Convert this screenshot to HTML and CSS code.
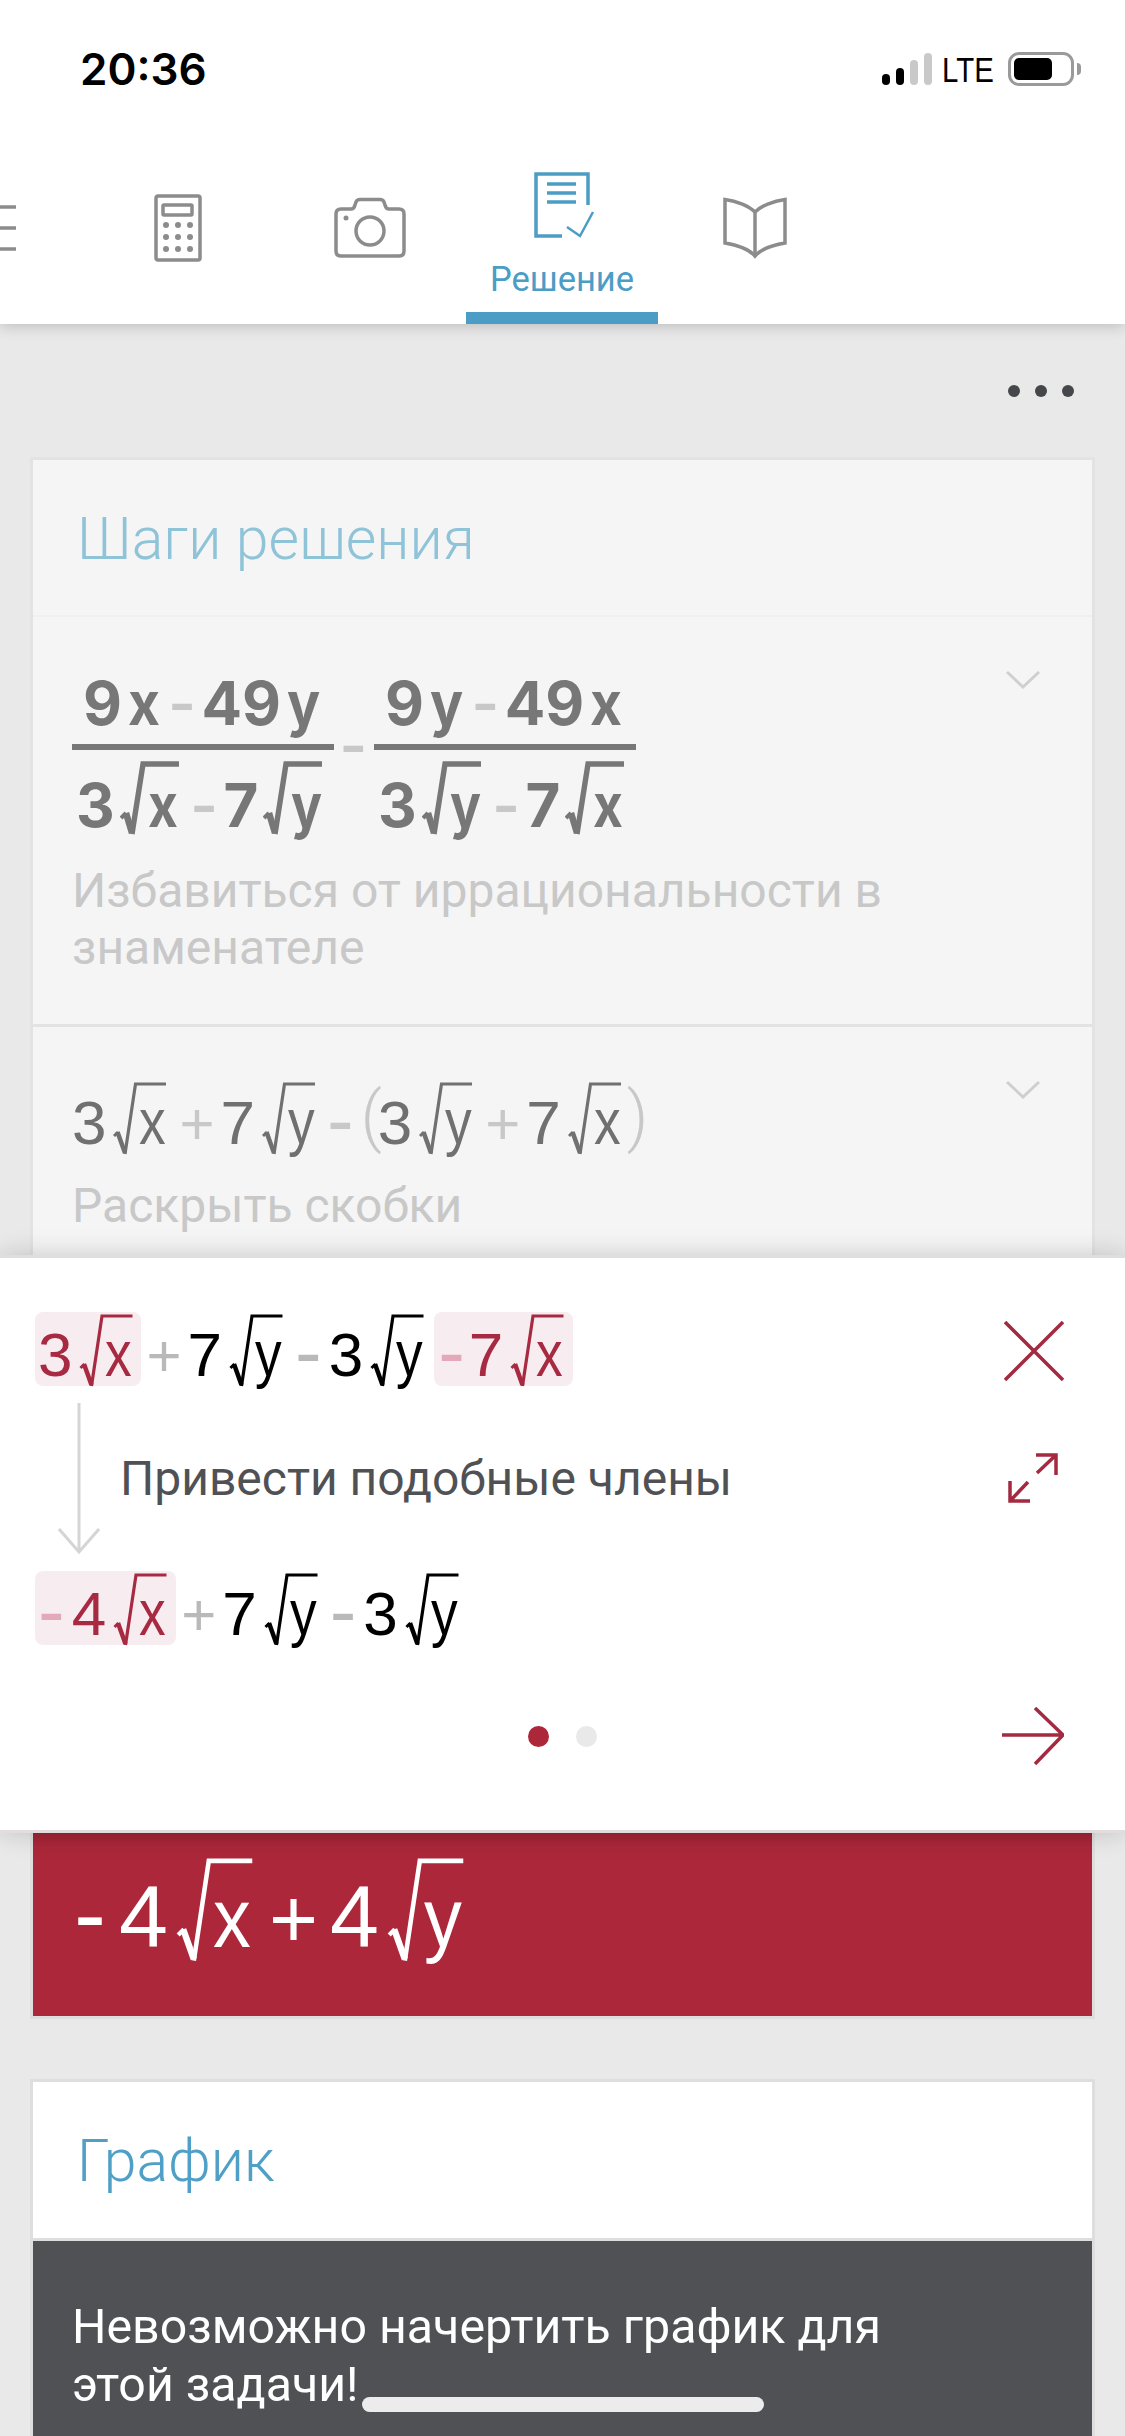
FILE: index.html
```html
<!DOCTYPE html>
<html lang="ru">
<head>
    <meta charset="UTF-8">
    <meta name="viewport" content="width=device-width, initial-scale=1.0">
    <title>Решение</title>
    <link rel="stylesheet" href="styles.css">
</head>
<body>
    <!-- radical signs, reused by every root below -->
    <svg class="defs" aria-hidden="true">
        <symbol id="rad" viewBox="0 0 53 73">
            <path d="M1 54 L5 50" fill="none" stroke="currentColor" stroke-width="3"/>
            <path d="M4.500 50 L12 71" fill="none" stroke="currentColor" stroke-width="4.500"/>
            <path d="M12 72 L22.500 2 L53 2" fill="none" stroke="currentColor" stroke-width="3.200"/>
        </symbol>
        <symbol id="rad-bold" viewBox="0 0 59 75">
            <path d="M1 57 L6 52" fill="none" stroke="currentColor" stroke-width="4"/>
            <path d="M6 52 L12 72" fill="none" stroke="currentColor" stroke-width="6.500"/>
            <path d="M12 73 L23 3 L59 3" fill="none" stroke="currentColor" stroke-width="5.400"/>
        </symbol>
    </svg>

    <div class="page">
        <header class="top">
            <div class="status">
                <span class="time">20:36</span>
                <div class="status-right">
                    <div class="signal">
                        <i class="s1"></i><i class="s2"></i><i class="s3"></i><i class="s4"></i>
                    </div>
                    <span class="lte">LTE</span>
                    <div class="battery"><div class="battery-fill"></div></div>
                    <div class="battery-nub"></div>
                </div>
            </div>
            <nav class="tabs">
                <div class="tab">
                    <svg width="60" height="48" viewBox="0 0 60 48" class="ico">
                        <path d="M0 3H60M0 24H60M0 45H60" />
                    </svg>
                </div>
                <div class="tab">
                    <svg width="48" height="68" viewBox="0 0 48 68" class="ico">
                        <rect x="2" y="2" width="44" height="64" rx="2"/>
                        <rect x="9" y="11" width="29" height="10" rx="1"/>
                        <g class="ico-dots">
                            <circle cx="12" cy="31" r="3"/><circle cx="24" cy="31" r="3"/><circle cx="36" cy="31" r="3"/>
                            <circle cx="12" cy="43" r="3"/><circle cx="24" cy="43" r="3"/><circle cx="36" cy="43" r="3"/>
                            <circle cx="12" cy="55" r="3"/><circle cx="24" cy="55" r="3"/><circle cx="36" cy="55" r="3"/>
                        </g>
                    </svg>
                </div>
                <div class="tab">
                    <svg width="72" height="60" viewBox="0 0 72 60" class="ico">
                        <path d="M2 16 Q2 11 7 11 H17 Q20 11 21 7 L22 4 Q23 1.500 26 1.500 H46 Q49 1.500 50 4 L51 7 Q52 11 55 11 H65 Q70 11 70 16 V53 Q70 58 65 58 H7 Q2 58 2 53 Z"/>
                        <circle cx="36" cy="33" r="14"/>
                        <circle class="ico-fill" cx="12" cy="20" r="2.500"/>
                    </svg>
                </div>
                <div class="tab tab-active">
                    <svg width="60" height="66" viewBox="0 0 60 66" class="ico ico-blue">
                        <path d="M30 64 H4 V2 H56 V33"/>
                        <path d="M15 12H44M15 21H44M15 30H44"/>
                        <path class="ico-thin" d="M35 55 L48 64 L61 40"/>
                    </svg>
                    <span class="tab-label">Решение</span>
                </div>
                <div class="tab">
                    <svg width="64" height="60" viewBox="-1 0 64 60" class="ico">
                        <path d="M32 14 C26 8 14 3 2 1.500 V45 C14 47 25 50 32 58 C39 50 50 47 62 45 V1.500 C50 3 38 8 32 14 Z"/>
                        <path d="M32 14 V58"/>
                    </svg>
                </div>
            </nav>
        </header>

        <div class="more"><i></i><i></i><i></i></div>

        <main class="content">
            <section class="card card-steps">
                <h2 class="card-title card-title-faded">Шаги решения</h2>

                <div class="step">
                    <div class="math-frac">
                        <div class="frac">
                            <div class="math num">
                                <b class="n">9</b><b class="v">x</b><span class="op minus">-</span><b class="n">49</b><b class="v">y</b>
                            </div>
                            <div class="math den">
                                <b class="n">3</b>
                                <b class="sqrt"><svg><use href="#rad-bold"/></svg><span class="v">x</span></b>
                                <span class="op minus">-</span>
                                <b class="n">7</b>
                                <b class="sqrt"><svg><use href="#rad-bold"/></svg><span class="v">y</span></b>
                            </div>
                        </div>
                        <span class="op minus frac-minus">-</span>
                        <div class="frac">
                            <div class="math num">
                                <b class="n">9</b><b class="v">y</b><span class="op minus">-</span><b class="n">49</b><b class="v">x</b>
                            </div>
                            <div class="math den">
                                <b class="n">3</b>
                                <b class="sqrt"><svg><use href="#rad-bold"/></svg><span class="v">y</span></b>
                                <span class="op minus">-</span>
                                <b class="n">7</b>
                                <b class="sqrt"><svg><use href="#rad-bold"/></svg><span class="v">x</span></b>
                            </div>
                        </div>
                    </div>
                    <p class="step-text">Избавиться от иррациональности в знаменателе</p>
                    <svg class="chev" width="34" height="20" viewBox="0 0 34 20"><path d="M1 2 L17 17 L33 2"/></svg>
                </div>

                <div class="step step-2">
                    <div class="math">
                        <span class="n">3</span>
                        <span class="sqrt"><svg><use href="#rad"/></svg><span class="v">x</span></span>
                        <span class="op">+</span>
                        <span class="n">7</span>
                        <span class="sqrt"><svg><use href="#rad"/></svg><span class="v">y</span></span>
                        <span class="op minus">-</span>
                        <span class="op paren">(</span>
                        <span class="n">3</span>
                        <span class="sqrt"><svg><use href="#rad"/></svg><span class="v">y</span></span>
                        <span class="op">+</span>
                        <span class="n">7</span>
                        <span class="sqrt"><svg><use href="#rad"/></svg><span class="v">x</span></span>
                        <span class="op paren paren-end">)</span>
                    </div>
                    <p class="step-text">Раскрыть скобки</p>
                    <svg class="chev" width="34" height="20" viewBox="0 0 34 20"><path d="M1 2 L17 17 L33 2"/></svg>
                </div>
            </section>

            <section class="answer">
                <div class="math math-big">
                    <span class="op-big minus-big">-</span>
                    <span class="n">4</span>
                    <span class="sqrt"><svg><use href="#rad"/></svg><span class="v">x</span></span>
                    <span class="op-big">+</span>
                    <span class="n">4</span>
                    <span class="sqrt"><svg><use href="#rad"/></svg><span class="v">y</span></span>
                </div>
            </section>

            <section class="card card-graph">
                <h2 class="card-title">График</h2>
                <div class="graph-msg">Невозможно начертить график для этой задачи!</div>
            </section>
        </main>

        <!-- popup with the current step, sits over the list -->
        <aside class="sheet">
            <div class="sheet-row">
                <div class="math">
                    <span class="hl hl-a">
                        <span class="n">3</span>
                        <span class="sqrt"><svg><use href="#rad"/></svg><span class="v">x</span></span>
                    </span>
                    <span class="op">+</span>
                    <span class="n">7</span>
                    <span class="sqrt"><svg><use href="#rad"/></svg><span class="v">y</span></span>
                    <span class="op minus">-</span>
                    <span class="n">3</span>
                    <span class="sqrt"><svg><use href="#rad"/></svg><span class="v">y</span></span>
                    <span class="hl hl-b">
                        <span class="op minus">-</span>
                        <span class="n">7</span>
                        <span class="sqrt"><svg><use href="#rad"/></svg><span class="v">x</span></span>
                    </span>
                </div>
                <svg class="act act-close" width="60" height="60" viewBox="0 0 60 60"><path d="M1 1 L59 59 M59 1 L1 59"/></svg>
            </div>

            <div class="sheet-mid">
                <svg class="down" width="42" height="152" viewBox="0 0 42 152"><path d="M21 0 V148 M1 126 L21 149 L41 126"/></svg>
                <p class="sheet-text">Привести подобные члены</p>
                <svg class="act act-expand" width="50" height="50" viewBox="0 0 50 50"><path d="M28 2 H48 V22 M48 2 L29 20 M2 28 V48 H22 M2 48 L20 29"/></svg>
            </div>

            <div class="math sheet-result">
                <span class="hl hl-c">
                    <span class="op minus">-</span>
                    <span class="n">4</span>
                    <span class="sqrt"><svg><use href="#rad"/></svg><span class="v">x</span></span>
                </span>
                <span class="op">+</span>
                <span class="n">7</span>
                <span class="sqrt"><svg><use href="#rad"/></svg><span class="v">y</span></span>
                <span class="op minus">-</span>
                <span class="n">3</span>
                <span class="sqrt"><svg><use href="#rad"/></svg><span class="v">y</span></span>
            </div>

            <div class="sheet-foot">
                <div class="dots"><i class="dot dot-on"></i><i class="dot"></i></div>
                <svg class="act" width="62" height="58" viewBox="0 0 62 58"><path d="M0 28 H61 M33 1 L61 28 L33 57"/></svg>
            </div>
        </aside>

        <div class="home-bar"></div>
    </div>
</body>
</html>
```

FILE: styles.css
```css
* {
    box-sizing: border-box;
}

body {
    margin: 0;
    font-family: Roboto, sans-serif;
    background-color: #e9e9e9;
}

.defs {
    display: none;
}

.page {
    position: relative;
    width: 1125px;
    height: 2436px;
    overflow: hidden;
    background-color: #e9e9e9;
}

/* top bar */
.top {
    height: 324px;
    background-color: white;
    box-shadow: 0 2px 14px rgba(0, 0, 0, 0.2);
    position: relative;
}

.status {
    height: 132px;
    padding: 0 44px 0 80px;
    display: flex;
    justify-content: space-between;
    align-items: flex-start;
}

.time {
    margin-top: 44px;
    font-family: Inter, sans-serif;
    font-weight: 600;
    font-size: 44px;
    line-height: 50px;
    color: black;
}

.status-right {
    display: flex;
    align-items: flex-start;
    margin-top: 52px;
}

.signal {
    height: 33px;
    display: flex;
    align-items: flex-end;
    gap: 6px;
}

.signal i {
    width: 8px;
    border-radius: 4px;
    background-color: #c9c9c9;
}

.signal .s1 {
    height: 11px;
    background-color: black;
}

.signal .s2 {
    height: 17px;
    background-color: black;
}

.signal .s3 {
    height: 25px;
}

.signal .s4 {
    height: 32px;
}

.lte {
    margin: 1px 14px 0 10px;
    width: 52px;
    font-family: "Liberation Sans", sans-serif;
    font-size: 35px;
    line-height: 34px;
    color: black;
    transform: scaleX(0.84);
    transform-origin: left;
}

.battery {
    width: 66px;
    height: 34px;
    border: 3px solid #9a9a9a;
    border-radius: 11px;
    padding: 3px;
}

.battery-fill {
    width: 38px;
    height: 22px;
    border-radius: 5px;
    background-color: black;
}

.battery-nub {
    width: 4px;
    height: 12px;
    margin: 11px 0 0 3px;
    border-radius: 0 4px 4px 0;
    background-color: #999;
}

.tabs {
    height: 192px;
    margin-left: -110px;
    display: flex;
}

.tab {
    flex: none;
    width: 192px;
    display: flex;
    flex-direction: column;
    align-items: center;
    justify-content: center;
}

.tab-active {
    justify-content: flex-start;
    padding-top: 40px;
    border-bottom: 12px solid #4b9dc5;
}

.tab-label {
    margin-top: 22px;
    font-size: 34.500px;
    line-height: 38px;
    color: #4b9dc5;
}

.ico {
    fill: none;
    stroke: #8c8c8c;
    stroke-width: 3.500;
    overflow: visible;
}

.ico-dots circle,
.ico-fill {
    fill: #8c8c8c;
    stroke: none;
}

.ico-blue {
    stroke: #4b9dc5;
}

.ico-blue .ico-thin {
    stroke-width: 2.500;
}

.more {
    height: 133px;
    display: flex;
    justify-content: flex-end;
    align-items: center;
    gap: 15px;
    padding-right: 51px;
}

.more i {
    width: 12px;
    height: 12px;
    border-radius: 50%;
    background-color: #46474b;
}

/* cards */
.content {
    padding: 0 30px;
}

.card {
    border: 3px solid #dedede;
    background-color: white;
}

.card-steps {
    height: 1376px;
    background-color: #f5f5f5;
    border-color: #e3e3e3;
    border-bottom: none;
}

.card-title {
    margin: 0;
    height: 156px;
    padding: 44px 0 0 44px;
    font-weight: 300;
    font-size: 59px;
    line-height: 70px;
    color: #4f9fc6;
}

.card-title-faded {
    height: 157px;
    color: #8fc3d8;
    border-bottom: 2px solid #f0f0f0;
}

.step {
    position: relative;
    height: 410px;
    padding: 0 0 0 39px;
    border-bottom: 3px solid #e3e3e3;
}

.step-2 {
    height: 240px;
    padding-top: 58px;
    border-bottom: none;
}

.step-text {
    margin: 0;
    width: 900px;
    font-size: 48px;
    line-height: 57px;
    color: #c8c8c8;
}

.step-2 .step-text {
    margin-top: 16px;
}

.chev {
    position: absolute;
    top: 53px;
    right: 52px;
    fill: none;
    stroke: #cfcfcf;
    stroke-width: 3;
}

/* math */
.math {
    display: flex;
    align-items: baseline;
    font-family: "Liberation Sans", sans-serif;
    font-size: 60px;
    line-height: 74px;
    color: #707070;
}

.n {
    font-size: 62px;
    margin-right: -1px;
}

.op {
    color: #c8c8c8;
    margin: 0 6px 0 13px;
}

.minus {
    margin: 0 7px 0 12px;
    font-size: 80px;
    line-height: 60px;
    transform: translateY(3px);
}

.paren {
    margin: 0 -4px 0 0;
    font-weight: 300;
    font-family: Roboto, sans-serif;
    font-size: 66px;
    line-height: 60px;
    transform: translateY(-5px);
}

.paren-end {
    margin: 0 0 0 6px;
}

/* the sign is laid over the left of its radicand */
.sqrt {
    position: relative;
    flex: none;
    display: inline-block;
    width: 54px;
    margin-left: 8px;
    padding-left: 26px;
    font-weight: inherit;
}

.step-2 .sqrt {
    width: 53px;
}

.sqrt svg {
    position: absolute;
    left: 0;
    bottom: 6px;
    width: 100%;
    height: 73px;
}

.sqrt .v {
    display: inline-block;
    font-size: 65px;
    transform: scaleX(0.82);
    transform-origin: left;
}

.math-frac {
    display: flex;
    padding-top: 49px;
    height: 245px;
}

.frac {
    width: 262px;
}

.frac-minus {
    width: 40px;
    height: 40px;
    margin: 54px 0 0 0;
    padding-left: 6px;
    line-height: 40px;
    font-family: "Liberation Sans", sans-serif;
}

.frac b {
    font-family: Inter, sans-serif;
    font-weight: bold;
}

.frac .n {
    font-size: 60px;
    margin-right: 0;
}

.num {
    justify-content: center;
    height: 84px;
    border-bottom: 6px solid #777;
    color: #777;
}

.num .v {
    margin-left: 6px;
    transform: scaleX(0.92);
    transform-origin: left;
}

.num .op {
    margin: 0 6px 0 6px;
}

.den {
    margin-top: 18px;
    padding-left: 4px;
    color: #777;
}

.den .op {
    margin: 0 6px 0 12px;
}

.den .sqrt {
    width: 59px;
    margin-left: 5px;
    padding-left: 28px;
}

.den .sqrt svg {
    height: 75px;
}

.den .sqrt .v {
    font-size: 60px;
    transform: scaleX(0.86);
}

/* red answer */
.answer {
    height: 186px;
    padding: 29px 0 0 41px;
    background: linear-gradient(#9f2436 0, #ab2739 14px);
    border: 3px solid #dedede;
    border-top: none;
}

.math-big {
    font-size: 84px;
    line-height: 104px;
    color: white;
}

.math-big .n {
    font-size: 88px;
    margin-right: -2px;
}

.math-big .sqrt {
    width: 77px;
    margin-left: 10px;
    padding-left: 37px;
}

.math-big .sqrt svg {
    bottom: 8px;
    height: 104px;
}

.math-big .sqrt .v {
    font-size: 84px;
    transform: scaleX(0.9);
}

.op-big {
    margin: 0 12px 0 16px;
}

.minus-big {
    margin: 0 13px 0 0;
    font-size: 96px;
}

.card-graph {
    margin-top: 60px;
    height: 400px;
}

.graph-msg {
    border-top: 3px solid #dedede;
    height: 240px;
    padding: 57px 150px 0 39px;
    background-color: #505155;
    color: white;
    font-size: 48.300px;
    line-height: 58px;
}

/* popup sheet */
.sheet {
    position: absolute;
    top: 1255px;
    left: 0;
    width: 1125px;
    height: 578px;
    padding: 0 61px 0 35px;
    background-color: white;
    border-top: 3px solid #dedede;
    border-bottom: 3px solid #e3dcdc;
    box-shadow: 0 0 24px rgba(0, 0, 0, 0.18);
}

.sheet .math {
    color: black;
}

.sheet .op {
    color: #b9b9b9;
}

.sheet-row {
    padding-top: 54px;
    height: 140px;
    display: flex;
    justify-content: space-between;
}

.hl {
    display: inline-flex;
    align-items: baseline;
    height: 74px;
    padding-top: 5px;
    border-radius: 8px;
    background-color: #f7edf0;
    color: #a82a42;
}

.hl-a {
    padding-left: 3px;
    padding-right: 8px;
}

.hl-b {
    margin-left: 10px;
    padding-left: 4px;
    padding-right: 9px;
}

.hl-c {
    padding-left: 3px;
    padding-right: 9px;
}

.hl + .op {
    margin-left: 5px;
}

.sheet .hl .op {
    margin: 0 4px 0 0;
    color: #e3a9b8;
}

.sheet .hl-c .op {
    margin-right: 7px;
}

.act {
    flex: none;
    fill: none;
    stroke: #a32a40;
    stroke-width: 3.500;
}

.act-close {
    margin-top: 9px;
}

.sheet-mid {
    position: relative;
    height: 173px;
    padding: 0 0 12px 85px;
    display: flex;
    align-items: center;
    justify-content: space-between;
}

.down {
    position: absolute;
    left: 23px;
    top: 5px;
    fill: none;
    stroke: #d5d5d5;
    stroke-width: 3;
}

.sheet-text {
    margin: 0;
    font-size: 48px;
    line-height: 57px;
    color: #505155;
}

.act-expand {
    margin: 0 6px 2px 0;
}

.sheet-result {
    height: 74px;
}

.sheet-foot {
    margin-top: 56px;
    padding-left: 493px;
    display: flex;
    align-items: flex-start;
    justify-content: space-between;
}

.sheet-foot .act {
    margin-top: 6px;
}

.dots {
    display: flex;
    gap: 27px;
    margin-top: 25px;
}

.dot {
    width: 21px;
    height: 21px;
    border-radius: 50%;
    background-color: #e9e9e9;
}

.dot-on {
    background-color: #ab2739;
}

.home-bar {
    position: absolute;
    left: 362px;
    top: 2397px;
    width: 402px;
    height: 15px;
    border-radius: 8px;
    background-color: #ececec;
}
```
